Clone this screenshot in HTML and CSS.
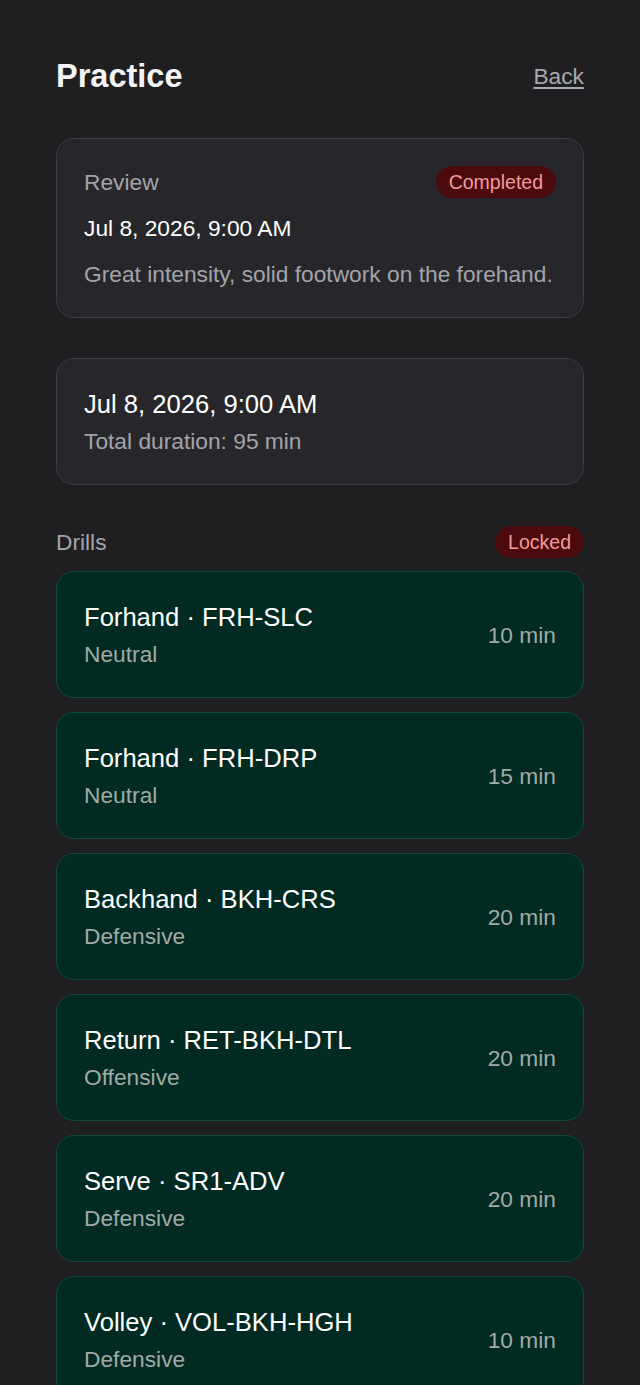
FILE: index.html
```html
<!DOCTYPE html>
<html lang="en">
<head>
    <meta charset="UTF-8">
    <meta name="viewport" content="width=device-width, initial-scale=1.0">
    <title>Practice</title>
    <link rel="stylesheet" href="styles.css">
</head>
<body>
    <div class="container">
        <div class="header">
            <div class="title">Practice</div>
            <a class="back-link" href="#">Back</a>
        </div>

        <div class="card review">
            <div class="row">
                <span class="label">Review</span>
                <span class="badge">Completed</span>
            </div>
            <div class="review-date">Jul 8, 2026, 9:00 AM</div>
            <div class="review-note">Great intensity, solid footwork on the forehand.</div>
        </div>

        <div class="card summary">
            <div class="summary-date">Jul 8, 2026, 9:00 AM</div>
            <div class="summary-total">Total duration: 95 min</div>
        </div>

        <div class="row drills-header">
            <span class="label">Drills</span>
            <span class="badge">Locked</span>
        </div>

        <div class="drill-list">
            <div class="drill">
                <div class="drill-info">
                    <div class="drill-name">Forhand · FRH-SLC</div>
                    <div class="drill-type">Neutral</div>
                </div>
                <div class="drill-time">10 min</div>
            </div>
            <div class="drill">
                <div class="drill-info">
                    <div class="drill-name">Forhand · FRH-DRP</div>
                    <div class="drill-type">Neutral</div>
                </div>
                <div class="drill-time">15 min</div>
            </div>
            <div class="drill">
                <div class="drill-info">
                    <div class="drill-name">Backhand · BKH-CRS</div>
                    <div class="drill-type">Defensive</div>
                </div>
                <div class="drill-time">20 min</div>
            </div>
            <div class="drill">
                <div class="drill-info">
                    <div class="drill-name">Return · RET-BKH-DTL</div>
                    <div class="drill-type">Offensive</div>
                </div>
                <div class="drill-time">20 min</div>
            </div>
            <div class="drill">
                <div class="drill-info">
                    <div class="drill-name">Serve · SR1-ADV</div>
                    <div class="drill-type">Defensive</div>
                </div>
                <div class="drill-time">20 min</div>
            </div>
            <div class="drill">
                <div class="drill-info">
                    <div class="drill-name">Volley · VOL-BKH-HGH</div>
                    <div class="drill-type">Defensive</div>
                </div>
                <div class="drill-time">10 min</div>
            </div>
        </div>
    </div>
</body>
</html>
```

FILE: styles.css
```css
* {
    margin: 0;
    padding: 0;
    box-sizing: border-box;
}

body {
    font-family: 'Liberation Sans', Arial, sans-serif;
    background: #1f1f22;
    color: #ffffff;
    font-size: 22.75px;
    line-height: 32px;
}

.container {
    padding: 56px 56px 40px;
}

.header {
    display: flex;
    justify-content: space-between;
    align-items: center;
    height: 40px;
    margin-bottom: 42px;
}

.title {
    font-size: 32.5px;
    font-weight: bold;
    color: #f4f4f6;
}

.back-link {
    color: #a8a8b0;
    text-decoration: underline;
    text-underline-offset: 3px;
}

.card {
    background: #27272b;
    border: 1px solid #3d3d42;
    border-radius: 18px;
    padding: 27px;
    margin-bottom: 40px;
}

.summary {
    margin-bottom: 41px;
}

.row {
    display: flex;
    justify-content: space-between;
    align-items: center;
    height: 32px;
}

.label {
    color: #a3a3aa;
}

.badge {
    background: #4b0a0c;
    color: #f39b9b;
    font-size: 19.5px;
    line-height: 32px;
    padding: 0 13px;
    border-radius: 16px;
}

.review-date {
    margin-top: 14px;
    color: #ffffff;
}

.review-note {
    margin-top: 14px;
    color: #a3a3aa;
}

.summary-date {
    font-size: 25.6px;
    line-height: 36px;
}

.summary-total {
    margin-top: 3px;
    color: #a3a3aa;
}

.drills-header {
    margin-bottom: 13px;
}

.drill-list {
    display: flex;
    flex-direction: column;
    gap: 14px;
}

.drill {
    display: flex;
    justify-content: space-between;
    align-items: center;
    background: #002a22;
    border: 1px solid #0e4b39;
    border-radius: 18px;
    padding: 27px;
}

.drill-name {
    font-size: 25.6px;
    line-height: 36px;
}

.drill-type {
    margin-top: 3px;
    color: #a0aaa6;
}

.drill-time {
    color: #a0aaa6;
}
```
